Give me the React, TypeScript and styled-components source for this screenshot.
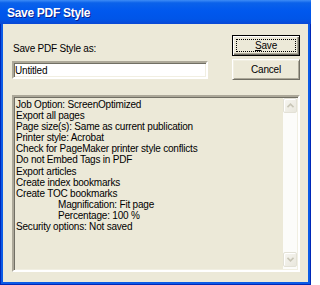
import React from 'react';
import styled, { createGlobalStyle } from 'styled-components';

const GlobalStyle = createGlobalStyle`
    html, body {
        margin: 0;
        padding: 0;
        background: #fff;
    }
    * {
        box-sizing: border-box;
    }
`

const Window = styled.div`
    width: 311px;
    height: 285px;
    display: flex;
    flex-direction: column;
    background: #0028b8;
    padding: 0 1px 1px 1px;
    font-family: "Liberation Sans", Arial, sans-serif;
    font-size: 10px;
    letter-spacing: -0.2px;
    color: #000;
`

const TitleBar = styled.div`
    height: 24px;
    margin: 0 -1px;
    padding: 3px 0 0 7px;
    line-height: 21px;
    background: linear-gradient(to bottom, #3d8cf6 0%, #0b62ea 12%, #0058ee 45%, #0055e8 80%, #0a48d4 100%);
    color: #fff;
    font-size: 12px;
    font-weight: bold;
    letter-spacing: -0.3px;
    text-shadow: 1px 1px 0 #0a1e8c;
`

const Frame = styled.div`
    flex: 1;
    display: flex;
    flex-direction: column;
    border: 2px solid #0b5be6;
    border-top: none;
    background: #ece9d8;
    padding: 11px 8px 10px 9px;
`

const TopRow = styled.div`
    display: flex;
    justify-content: space-between;
`

const Field = styled.div`
    display: flex;
    flex-direction: column;
`

const Label = styled.div`
    margin: 7px 0 6px 1px;
    line-height: 13px;
`

const TextInput = styled.div`
    width: 196px;
    height: 18px;
    padding-left: 1px;
    line-height: 14px;
    background: #fff;
    border: 2px solid;
    border-color: #aca899 #fff #fff #aca899;
    box-shadow: inset 1px 1px 0 #716f64, inset -1px -1px 0 #f1efe2;
    padding-top: 1px;
`

const Buttons = styled.div`
    display: flex;
    flex-direction: column;
    gap: 3px;
`

const Button = styled.div<{ $default?: boolean }>`
    position: relative;
    width: 68px;
    height: 21px;
    display: flex;
    align-items: center;
    justify-content: center;
    background: #ece9d8;
    border: 1px solid;
    border-color: ${(p) => (p.$default ? '#000' : '#fff #716f64 #716f64 #fff')};
    box-shadow: ${(p) =>
        p.$default
            ? 'inset 1px 1px 0 #fff, inset -1px -1px 0 #716f64, inset -2px -2px 0 #aca899'
            : 'inset 1px 1px 0 #f1efe2, inset -1px -1px 0 #aca899'};
    &::after {
        content: '';
        display: ${(p) => (p.$default ? 'block' : 'none')};
        position: absolute;
        inset: 3px;
        border: 1px dotted #000;
    }
`

const ListBox = styled.div`
    flex: 1;
    margin-top: 15px;
    display: flex;
    border: 2px solid;
    border-color: #aca899 #fff #fff #aca899;
    box-shadow: inset 1px 1px 0 #716f64, inset -1px -1px 0 #f1efe2;
    padding: 1px 1px 1px 1px;
`

const Lines = styled.div`
    flex: 1;
    padding: 1px 0 0 1px;
    line-height: 11.1px;
    white-space: nowrap;
`

const Line = styled.div<{ $indent?: boolean }>`
    padding-left: ${(p) => (p.$indent ? '42px' : '0')};
`

const ScrollBar = styled.div`
    width: 14px;
    display: flex;
    flex-direction: column;
    justify-content: space-between;
    background: #fcfcfa;
    padding-bottom: 2px;
`

const ArrowButton = styled.div`
    width: 14px;
    height: 15px;
    display: flex;
    align-items: center;
    justify-content: center;
    border: 1px solid #e3e1d6;
    border-radius: 2px;
    background: linear-gradient(to bottom right, #f7f6f1, #e9e7dd);
    box-shadow: inset 1px 1px 0 #fff;
`

const Arrow = ({ down }: { down?: boolean }) => (
    <svg width="7" height="5" viewBox="0 0 7 5">
        <path
            d={down ? 'M0.5 0.8 L3.5 3.8 L6.5 0.8' : 'M0.5 4.2 L3.5 1.2 L6.5 4.2'}
            fill="none"
            stroke="#c8c5b6"
            strokeWidth="1.6"
        />
    </svg>
)

const lines = [
    'Job Option: ScreenOptimized',
    'Export all pages',
    'Page size(s): Same as current publication',
    'Printer style: Acrobat',
    'Check for PageMaker printer style conflicts',
    'Do not Embed Tags in PDF',
    'Export articles',
    'Create index bookmarks',
    'Create TOC bookmarks',
]

const App = () => {
    return (
        <>
            <GlobalStyle />
            <Window>
                <TitleBar>Save PDF Style</TitleBar>
                <Frame>
                    <TopRow>
                        <Field>
                            <Label>Save PDF Style as:</Label>
                            <TextInput>Untitled</TextInput>
                        </Field>
                        <Buttons>
                            <Button $default>
                                <span><u>S</u>ave</span>
                            </Button>
                            <Button>Cancel</Button>
                        </Buttons>
                    </TopRow>
                    <ListBox>
                        <Lines>
                            {lines.map((l) => (
                                <Line key={l}>{l}</Line>
                            ))}
                            <Line $indent>Magnification: Fit page</Line>
                            <Line $indent>Percentage: 100 %</Line>
                            <Line>Security options: Not saved</Line>
                        </Lines>
                        <ScrollBar>
                            <ArrowButton><Arrow /></ArrowButton>
                            <ArrowButton><Arrow down /></ArrowButton>
                        </ScrollBar>
                    </ListBox>
                </Frame>
            </Window>
        </>
    )
}

export default App;
